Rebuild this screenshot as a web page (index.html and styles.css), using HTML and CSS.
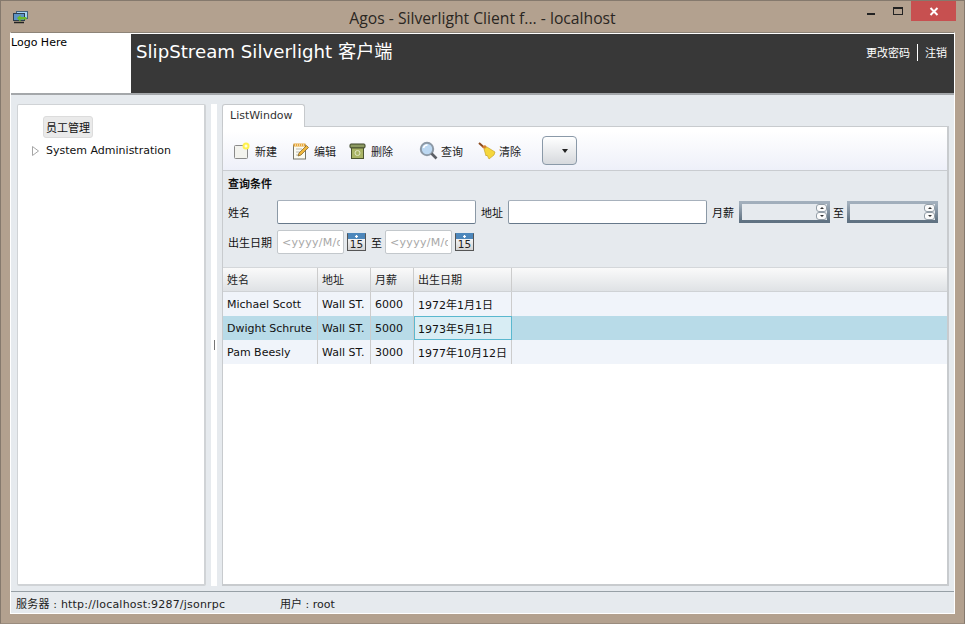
FILE: index.html
```html
<!DOCTYPE html>
<html lang="zh">
<head>
<meta charset="utf-8">
<title>Agos - Silverlight Client</title>
<link rel="stylesheet" href="styles.css">
</head>
<body>
<div class="window">
  <div class="titlebar">
    <svg class="app-icon" width="17" height="14" viewBox="0 0 17 14">
      <rect x="4.500" y="1.500" width="11" height="7" fill="#a9d6f5" stroke="#44617c"/>
      <rect x="1.500" y="3.500" width="11" height="7" fill="#5d93c6" stroke="#2c3e50"/>
      <path d="M2 12.500h10" stroke="#222" stroke-width="1.500"/>
      <path d="M5 8l3.500-3v2h6v2.500h-6v2.500z" fill="#6cbb2c"/>
    </svg>
    <div class="title">Agos - Silverlight Client f... - localhost</div>
    <div class="win-controls">
      <div class="win-btn"><span class="min-glyph"></span></div>
      <div class="win-btn"><span class="max-glyph"></span></div>
      <div class="win-close">
        <svg width="10" height="9" viewBox="0 0 10 9"><path d="M1.500 1l7 7M8.500 1l-7 7" stroke="#fff" stroke-width="2"/></svg>
      </div>
    </div>
  </div>
  <div class="client">
    <header class="banner">
      <div class="logo">Logo Here</div>
      <div class="brand">
        <div class="brand-title">SlipStream Silverlight 客户端</div>
        <div class="brand-links"><span>更改密码</span><span class="link-sep"></span><span>注销</span></div>
      </div>
    </header>
    <div class="main">
      <aside class="nav-panel">
        <div class="nav-selected">员工管理</div>
        <div class="nav-item">
          <svg class="nav-arrow" width="7" height="10" viewBox="0 0 7 10"><path d="M.5.5l6 4.500-6 4.500z" fill="#fff" stroke="#a6a6a6"/></svg>
          <span>System Administration</span>
        </div>
      </aside>
      <div class="splitter"><span class="grip"></span></div>
      <section class="content">
        <div class="tabs"><div class="tab">ListWindow</div></div>
        <div class="tab-body">
          <div class="toolbar">
            <div class="tool tool-new">
              <svg width="18" height="18" viewBox="0 0 18 18"><rect x="1.500" y="3.500" width="13" height="13" rx="1" fill="#f3f3ee" stroke="#8a8a8a"/><circle cx="13" cy="4" r="3.500" fill="#fff14d"/><circle cx="13" cy="4" r="1.500" fill="#fffde0"/></svg>
              <span>新建</span>
            </div>
            <div class="tool tool-edit">
              <svg width="18" height="18" viewBox="0 0 18 18"><rect x="1.500" y="3" width="12" height="14" fill="#fbfbf2" stroke="#77766a"/><path d="M1.500 1.500h12v3h-12z" fill="#e8a83a"/><path d="M3 3h9" stroke="#fff" stroke-dasharray="1 1"/><path d="M4 7h6M4 10h4M4 13h3" stroke="#b9b9b0"/><path d="M6 14l1-3 7.500-7.500 2 2-7.500 7.500z" fill="#f0b73c" stroke="#7a5a20" stroke-width=".7"/></svg>
              <span>编辑</span>
            </div>
            <div class="tool tool-del">
              <svg width="18" height="18" viewBox="0 0 18 18"><rect x="1" y="2" width="15" height="4" rx="1" fill="#8d9a62" stroke="#3c4428"/><rect x="2.500" y="6" width="12" height="10.500" fill="#a9b466" stroke="#4c5530"/><circle cx="8.500" cy="11" r="2.500" fill="none" stroke="#e2e7c4"/></svg>
              <span>删除</span>
            </div>
            <div class="tool tool-find">
              <svg width="19" height="19" viewBox="0 0 19 19"><circle cx="8" cy="8" r="6.200" fill="#bcd8f2" stroke="#8d99a6" stroke-width="2"/><path d="M4.500 7a4 4 0 0 1 4-3" stroke="#fff" fill="none" stroke-width="1.500"/><path d="M12.500 12.500l5 5" stroke="#5b5f66" stroke-width="2.600"/></svg>
              <span>查询</span>
            </div>
            <div class="tool tool-clear">
              <svg width="20" height="18" viewBox="0 0 20 18"><path d="M1 1l4.500 4" stroke="#8c4a1c" stroke-width="2"/><path d="M4 5l3-2 2 2-3 2z" fill="#d9822b"/><path d="M6 7l3-2 8 5-1 3-5 4-2-4-1 1z" fill="#f5d63c" stroke="#c19a18" stroke-width=".6"/></svg>
              <span>清除</span>
            </div>
            <button class="drop-btn" type="button"><span class="drop-arrow"></span></button>
          </div>
          <form class="query">
            <div class="query-title">查询条件</div>
            <div class="query-row row-one">
              <label class="lbl lbl-name">姓名</label>
              <div class="input input-wide"></div>
              <label class="lbl lbl-addr">地址</label>
              <div class="input input-wide"></div>
              <label class="lbl lbl-pay">月薪</label>
              <div class="spin"><span class="spin-btns"><i class="up"></i><i class="down"></i></span></div>
              <label class="lbl lbl-to">至</label>
              <div class="spin"><span class="spin-btns"><i class="up"></i><i class="down"></i></span></div>
            </div>
            <div class="query-row row-two">
              <label class="lbl lbl-date">出生日期</label>
              <div class="input input-date"><span class="placeholder">&lt;yyyy/M/d</span></div>
              <div class="cal"><span class="cal-num">15</span></div>
              <label class="lbl lbl-to2">至</label>
              <div class="input input-date"><span class="placeholder">&lt;yyyy/M/d</span></div>
              <div class="cal"><span class="cal-num">15</span></div>
            </div>
          </form>
          <div class="grid">
            <div class="grid-row grid-head">
              <div class="cell c1">姓名</div><div class="cell c2">地址</div><div class="cell c3">月薪</div><div class="cell c4">出生日期</div><div class="cell-fill"></div>
            </div>
            <div class="grid-row data">
              <div class="cell c1">Michael Scott</div><div class="cell c2">Wall ST.</div><div class="cell c3">6000</div><div class="cell c4">1972年1月1日</div>
            </div>
            <div class="grid-row data selected">
              <div class="cell c1">Dwight Schrute</div><div class="cell c2">Wall ST.</div><div class="cell c3">5000</div><div class="cell c4 current">1973年5月1日</div>
            </div>
            <div class="grid-row data">
              <div class="cell c1">Pam Beesly</div><div class="cell c2">Wall ST.</div><div class="cell c3">3000</div><div class="cell c4">1977年10月12日</div>
            </div>
          </div>
        </div>
      </section>
    </div>
    <footer class="status">
      <span class="status-server">服务器 : http://localhost:9287/jsonrpc</span>
      <span>用户 : root</span>
    </footer>
  </div>
</div>
</body>
</html>
```
FILE: styles.css
```css
* { box-sizing: border-box; }
html, body { margin: 0; padding: 0; }
body {
  width: 965px;
  height: 624px;
  overflow: hidden;
  font-family: "DejaVu Sans", "Noto Sans CJK SC", sans-serif;
  font-size: 11px;
  color: #111;
}
.window {
  width: 965px;
  height: 624px;
  background: #b3a18f;
  border: 1px solid #85796d;
  border-bottom-color: #9a8c7e;
  padding: 0 9px 9px 9px;
  display: flex;
  flex-direction: column;
}
.titlebar {
  height: 31px;
  flex: none;
  display: flex;
  position: relative;
  align-items: flex-start;
  justify-content: center;
}
.app-icon { position: absolute; left: 2px; top: 9px; }
.title {
  margin-top: 7px;
  font-family: "Open Sans", sans-serif;
  font-size: 15.700px;
  line-height: 20px;
  color: #2a2622;
}
.win-controls {
  position: absolute;
  right: -1px;
  top: 0;
  display: flex;
  align-items: flex-start;
}
.win-btn { width: 27px; height: 20px; display: flex; align-items: center; justify-content: center; }
.min-glyph { width: 8px; height: 2px; background: #222; margin-top: 6px; }
.max-glyph { width: 10px; height: 8px; border: 1px solid #222; border-top-width: 2px; }
.win-close {
  width: 45px;
  height: 20px;
  background: #c75050;
  display: flex;
  align-items: center;
  justify-content: center;
}
.client {
  flex: 1;
  width: 945px;
  min-height: 0;
  display: flex;
  flex-direction: column;
  background: #e6eaee;
  border: 1px solid #fff;
  border-top-color: #8d8478;
}
.banner {
  height: 62px;
  flex: none;
  display: flex;
  border-bottom: 2px solid #7d7d7d;
  border-image: linear-gradient(#666, #a5a8ab) 1;
}
.logo {
  width: 120px;
  background: #fff;
  padding: 3px 0 0 0;
  line-height: 13px;
  color: #000;
}
.brand {
  flex: 1;
  background: #383838;
  border-top: 1px solid #fff;
  color: #fff;
  display: flex;
  justify-content: space-between;
  padding: 6px 7px 0 5px;
}
.brand-title { font-size: 18.200px; line-height: 24px; }
.brand-links {
  display: flex;
  align-items: center;
  height: 17px;
  margin-top: 4px;
  font-family: "Noto Sans CJK SC", sans-serif;
  font-size: 11px;
  line-height: 17px;
}
.link-sep { width: 1px; height: 17px; background: #fff; margin: 0 7px; }
.main {
  flex: 1;
  min-height: 0;
  display: flex;
  padding: 9px 5px 5px 6px;
}
.nav-panel {
  width: 189px;
  flex: none;
  background: #fff;
  border: 2px solid #d0d3d6;
  border-width: 1px 2px 2px 1px;
  border-radius: 2px;
  padding: 11px 0 0 0;
}
.nav-selected {
  width: 50px;
  height: 22px;
  margin-left: 25px;
  background: #eaeaea;
  border: 1px solid #dcdcdc;
  border-radius: 3px;
  font-family: "Noto Sans CJK SC", sans-serif;
  font-size: 11px;
  line-height: 20px;
  text-align: center;
}
.nav-item {
  display: flex;
  align-items: center;
  height: 13px;
  margin-top: 6px;
  padding-left: 14px;
  line-height: 13px;
}
.nav-arrow { flex: none; margin-right: 7px; }
.splitter {
  width: 6px;
  flex: none;
  margin: 0 5px;
  background: #fff;
  display: flex;
  align-items: center;
  justify-content: center;
}
.grip { width: 1px; height: 10px; background: #777; }
.content { flex: 1; min-width: 0; display: flex; flex-direction: column; }
.tabs { height: 22px; flex: none; display: flex; position: relative; z-index: 1; }
.tab {
  width: 83px;
  height: 23px;
  background: #fff;
  border: 1px solid #c6c9cc;
  border-bottom: 0;
  border-radius: 3px 3px 0 0;
  padding: 3px 0 0 7px;
  line-height: 15px;
  color: #333;
}
.tab-body {
  flex: 1;
  min-height: 0;
  border: 1px solid #c8cbce;
  border-bottom-width: 2px;
  border-right-width: 2px;
  background: #fff;
  display: flex;
  flex-direction: column;
  padding-top: 4px;
}
.toolbar {
  height: 40px;
  flex: none;
  background: linear-gradient(#fff, #eef0f9);
  border-bottom: 1px solid #c9ccd0;
  display: flex;
  align-items: center;
  padding-left: 10px;
  font-family: "Noto Sans CJK SC", sans-serif;
  font-size: 11px;
  color: #222;
}
.tool { display: flex; align-items: center; gap: 4px; }
.tool svg { flex: none; }
.tool-edit { margin-left: 15px; }
.tool-del { margin-left: 13px; }
.tool-find { margin-left: 26px; gap: 3px; }
.tool-clear { margin-left: 15px; gap: 1px; }
.drop-btn {
  width: 35px;
  height: 29px;
  margin-left: 21px;
  padding: 0;
  border: 1px solid #8a99a8;
  border-radius: 4px;
  background: linear-gradient(#fff, #d6d9dd);
  display: flex;
  align-items: center;
  justify-content: center;
}
.drop-arrow {
  width: 0;
  height: 0;
  margin-left: 10px;
  border-style: solid;
  border-width: 4px 3.500px 0;
  border-color: #222 transparent transparent;
}
.query {
  height: 97px;
  flex: none;
  margin: 0;
  background: #e6eaee;
  border-bottom: 1px solid #d4d7da;
  padding: 5px 0 0 5px;
  font-family: "Noto Sans CJK SC", sans-serif;
  font-size: 11px;
}
.query-title { line-height: 14px; font-weight: bold; }
.query-row { display: flex; align-items: center; }
.row-one { margin-top: 10px; height: 24px; }
.row-two { margin-top: 6px; height: 24px; }
.lbl { flex: none; line-height: 14px; }
.lbl-name { width: 49px; }
.lbl-addr { margin-left: 5px; width: 27px; }
.lbl-pay { margin-left: 5px; width: 27px; }
.lbl-to { margin: 0 3px; width: 11px; }
.lbl-date { width: 49px; }
.lbl-to2 { margin-left: 5px; width: 14px; }
.input {
  height: 24px;
  background: #fff;
  border: 1px solid #8b99a6;
  border-top-color: #a7b1bc;
  border-bottom-color: #66788a;
  border-radius: 2px;
  flex: none;
}
.input-wide { width: 199px; }
.input-date {
  width: 67px;
  border-color: #c3c8cc;
  padding: 4px 3px 0 4px;
  font-family: "DejaVu Sans", sans-serif;
  line-height: 15px;
}
.placeholder {
  display: block;
  overflow: hidden;
  white-space: nowrap;
  letter-spacing: .3px;
  color: #a8a8a8;
}
.spin {
  width: 91px;
  height: 22px;
  flex: none;
  border: 3px solid #8d9dac;
  border-image: linear-gradient(#a3b0bd, #5f7181) 1;
  display: flex;
  align-items: center;
  justify-content: flex-end;
}
.spin-btns { display: flex; flex-direction: column; }
.spin-btns i {
  display: flex;
  width: 11px;
  height: 8px;
  background: #fbfbfb;
  border: 1px solid #939ea7;
  border-radius: 3px;
  align-items: center;
  justify-content: center;
}
.spin-btns .up::after { content: ""; border-style: solid; border-width: 0 2px 2px; border-color: transparent transparent #333; }
.spin-btns .down::after { content: ""; border-style: solid; border-width: 2px 2px 0; border-color: #333 transparent transparent; }
.cal {
  width: 19px;
  height: 18px;
  flex: none;
  margin-left: 3px;
  background:
    radial-gradient(circle at 50% 2.500px, #fff 0, #fff 1px, transparent 1.500px),
    linear-gradient(#4d87bb 0, #4d87bb 5px, #f4f4f4 5px, #d4d4d4 100%);
  border: 1px solid #555;
  border-top-color: #4d87bb;
  text-align: center;
  font-family: "DejaVu Sans", sans-serif;
  font-size: 10.500px;
  line-height: 11px;
  padding-top: 5px;
  color: #222;
}
.grid { flex: 1; min-height: 0; background: #fff; }
.grid-row { display: flex; }
.grid-head {
  height: 24px;
  background: linear-gradient(#fafafa, #dfe2e5);
  border-bottom: 1px solid #cfd2d5;
  font-family: "Noto Sans CJK SC", sans-serif;
  color: #222;
}
.grid-head .cell { padding-bottom: 2px; }
.data { height: 24px; background: #f0f4fa; }
.selected { background: #b8dbe8; }
.cell {
  flex: none;
  height: 100%;
  border-right: 1px solid #ccc;
  padding-left: 4px;
  display: flex;
  align-items: center;
  white-space: nowrap;
}
.cell-fill { flex: 1; }
.c1 { width: 95px; }
.c2 { width: 53px; }
.c3 { width: 43px; }
.c4 { width: 98px; }
.current { background: #d8edf4; border: 1px solid #5ab8cf; padding-left: 3px; }
.status {
  height: 22px;
  flex: none;
  border-top: 1px solid #97a0a6;
  background: #e6eaee;
  display: flex;
  align-items: center;
  padding-left: 5px;
  color: #222;
}
.status-server { width: 264px; letter-spacing: .2px; }
```
